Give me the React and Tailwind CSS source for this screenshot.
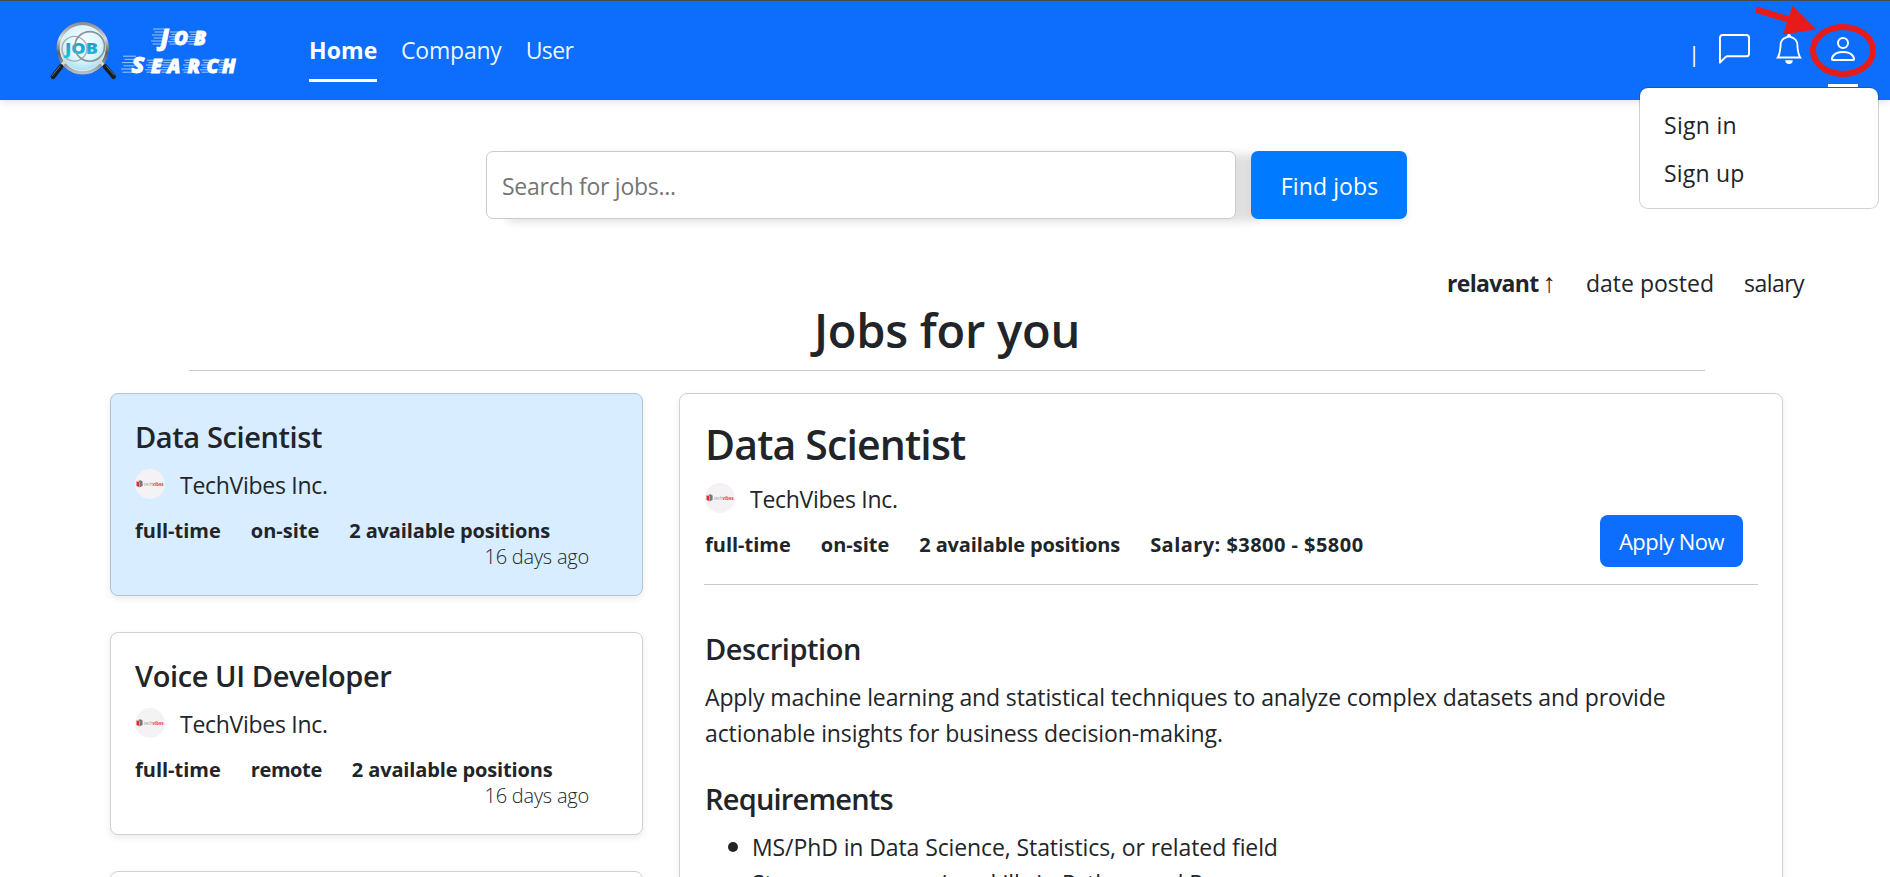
import React from 'react';
import { BsBell, BsChatLeft, BsPerson } from 'react-icons/bs';

function Streaks({ x, y, h, w = 7 }) {
  const n = 6;
  return (
    <g stroke="#fff" strokeWidth="0.8" opacity="0.75">
      {Array.from({ length: n }, (_, i) => {
        const ly = y - h + 0.5 + (i * (h - 1)) / (n - 1);
        const shift = (n - i) * 0.5 - 1;
        return <line key={i} x1={x - w + shift + (i % 2) * 2} x2={x + 3 + shift} y1={ly} y2={ly} />;
      })}
    </g>
  );
}

function Logo() {
  return (
    <svg className="block shrink-0" width="192" height="66" viewBox="48 18 192 66">
      <defs>
        <radialGradient id="glass" cx="0.5" cy="0.4" r="0.6">
          <stop offset="0" stopColor="#ffffff" />
          <stop offset="0.6" stopColor="#d9f6fd" />
          <stop offset="1" stopColor="#9fdcf2" />
        </radialGradient>
        <linearGradient id="rim" x1="0" y1="0" x2="0" y2="1">
          <stop offset="0" stopColor="#8f9295" />
          <stop offset="0.3" stopColor="#d6d9db" />
          <stop offset="0.6" stopColor="#5c6064" />
          <stop offset="1" stopColor="#b9bdc0" />
        </linearGradient>
        <linearGradient id="cyan" x1="0" y1="0" x2="0" y2="1">
          <stop offset="0" stopColor="#1f8fc0" />
          <stop offset="1" stopColor="#18c4e6" />
        </linearGradient>
      </defs>
      <circle cx="82.7" cy="48.2" r="24.4" fill="url(#glass)" stroke="url(#rim)" strokeWidth="3.6" />
      <circle cx="82.7" cy="48.2" r="22.6" fill="none" stroke="#eef4f6" strokeWidth="0.8" />
      <g strokeLinecap="round">
        <line x1="66" y1="60" x2="62" y2="65" stroke="#d5d8da" strokeWidth="3" />
        <line x1="61" y1="66.5" x2="53" y2="76.8" stroke="#1a1f24" strokeWidth="4.8" />
        <line x1="60" y1="66" x2="52.2" y2="75.8" stroke="#6a7076" strokeWidth="1" />
        <line x1="98.5" y1="60" x2="103.5" y2="65" stroke="#d5d8da" strokeWidth="3" />
        <line x1="105" y1="66.5" x2="113.6" y2="76.6" stroke="#1a1f24" strokeWidth="4.8" />
        <line x1="106.3" y1="66" x2="114.2" y2="75" stroke="#6a7076" strokeWidth="1" />
      </g>
      <circle cx="74.4" cy="48.8" r="12.4" fill="none" stroke="#a4aeb3" strokeWidth="1.3" />
      <text x="65" y="54.2" textLength="33" lengthAdjust="spacingAndGlyphs" fill="url(#cyan)" className="font-['Open_Sans',sans-serif] text-[16.5px] font-extrabold">JOB</text>
      <circle cx="89.7" cy="46.4" r="14.8" fill="none" stroke="#8a9498" strokeWidth="1.6" />
      <Streaks x={159} y={44.5} h={16} w={8} />
      <Streaks x={174} y={44.5} h={13} w={6} />
      <Streaks x={194} y={44.5} h={13} w={7} />
      <Streaks x={131} y={72.7} h={17} w={10} />
      <Streaks x={151} y={72.7} h={13} w={6} />
      <Streaks x={168} y={72.7} h={13} w={8} />
      <Streaks x={188} y={72.7} h={13} w={6} />
      <Streaks x={206} y={72.7} h={13} w={6} />
      <Streaks x={223} y={72.7} h={13} w={6} />
      <g fill="#fff" stroke="#fff" strokeWidth="0.8" className="font-['Open_Sans',sans-serif] font-extrabold italic">
        <text y="44.5"><tspan x="160.5" className="text-[22.5px]">J</tspan><tspan className="text-[19px]" x="174 194">OB</tspan></text>
        <text y="72.7"><tspan x="131.5" className="text-[23.5px]">S</tspan><tspan className="text-[19px]" x="151 167.5 187.5 206.5 222">EARCH</tspan></text>
      </g>
    </svg>
  );
}

function Header() {
  return (
    <header className="relative z-10 flex h-[100px] items-start border-t border-[#45484c] bg-[#0d6efd] pl-12 text-white shadow-[0_2px_8px_rgba(0,0,0,0.12)]">
      <div className="mt-[17px]"><Logo /></div>
      <nav className="mt-[31px] ml-[69px] flex gap-6 text-[23px] leading-9">
        <a className="w-[68px] border-b-3 border-white pb-[11px] font-bold tracking-[0.1px]">Home</a>
        <a className="text-white/95 tracking-[-0.2px]">Company</a>
        <a className="text-white/95 tracking-[-0.6px]">User</a>
      </nav>
      <div className="mr-8 ml-auto flex items-start">
        <span className="mt-[34px] mr-[19px] text-[22px] leading-9">|</span>
        <BsChatLeft className="mt-[33px] mr-6 size-[31px]" />
        <BsBell className="mt-[33px] mr-6 size-[30px]" />
        <span className="flex h-[86px] w-[30px] justify-center border-b-3 border-white">
          <BsPerson className="mt-[32px] size-8 shrink-0" />
        </span>
      </div>
      <div className="absolute top-[86px] left-[1639px] h-[122px] w-[240px] rounded-[9px] border border-black/18 bg-white bg-clip-padding pt-[13px] pl-6 text-[23px] leading-[48px] text-[#212529]">
        <div className="tracking-[0.3px]">Sign in</div>
        <div className="tracking-[0.2px]">Sign up</div>
      </div>
      <svg className="absolute top-[-1px] left-[1750px]" width="130" height="84" viewBox="1750 0 130 84">
        <ellipse cx="1843" cy="50.5" rx="30" ry="23.5" fill="none" stroke="#e81b1b" strokeWidth="6" />
        <path d="M1756 9.5 1792 20.5" stroke="#e81b1b" strokeWidth="6.4" />
        <path d="M1792.5 5.5 1816.5 29.5 1783 34.5Z" fill="#e81b1b" />
      </svg>
    </header>
  );
}

function Avatar() {
  return (
    <svg className="size-[30px] shrink-0" viewBox="0 0 30 30">
      <circle cx="15" cy="15" r="15" fill="#f4f2f5" />
      <path d="M1.5 12.3 4 13.2V18L1.5 17Z" fill="#e02b2b" />
      <path d="M3 12 5.5 11.2 7.6 12.4V17L4.4 18.6V13.3Z" fill="#77787c" />
      <text x="9" y="16.8" textLength="8.5" lengthAdjust="spacingAndGlyphs" fill="#9a9a9e" className="font-['Open_Sans',sans-serif] text-[4.6px]">tech</text>
      <text x="17.6" y="16.8" textLength="11" lengthAdjust="spacingAndGlyphs" fill="#e63b3b" className="font-['Open_Sans',sans-serif] text-[4.6px] font-bold">vibes</text>
    </svg>
  );
}

function Company() {
  return (
    <div className="mt-3 flex h-9 items-center">
      <span className="-mt-0.5"><Avatar /></span>
      <span className="ml-[15px] tracking-[-0.28px]">TechVibes Inc.</span>
    </div>
  );
}

function Tags({ place, salary }) {
  return (
    <div className="mt-[13px] flex h-[29px] gap-[30px] text-[20px] leading-[29px] font-bold whitespace-nowrap">
      <span>full-time</span>
      <span className={place === 'remote' ? 'tracking-[-0.4px]' : ''}>{place}</span>
      <span className="tracking-[-0.13px]">2 available positions</span>
      {salary && <span className="tracking-[0.456px]">{salary}</span>}
    </div>
  );
}

function Card({ active, children }) {
  return (
    <div className={`h-[203px] w-[533px] shrink-0 rounded-lg border pt-[25px] pl-6 shadow-[0_3px_7px_rgba(0,0,0,0.08)] ${active ? 'border-[#b0c5d7] bg-[#d8edff]' : 'border-[#d0d1d2] bg-white'}`}>
      {children}
    </div>
  );
}

function JobCard({ title, place, active }) {
  return (
    <Card active={active}>
      <h5 className="text-[29px] leading-9 font-semibold tracking-[-0.4px]">{title}</h5>
      <Company />
      <Tags place={place} />
      <div className="pr-[53px] text-right text-[20px] leading-[23px] font-light tracking-[-0.22px]">16 days ago</div>
    </Card>
  );
}

function Detail() {
  return (
    <div className="h-[600px] w-[1104px] rounded-lg border border-[#d0d1d2] px-6 pt-[25px] shadow-[0_3px_7px_rgba(0,0,0,0.08)]">
      <div className="flex h-[148px] items-end justify-between">
        <div className="pb-2 pl-px">
          <h3 className="text-[41px] leading-[50px] font-semibold tracking-[-0.85px]">Data Scientist</h3>
          <Company />
          <Tags place="on-site" salary="Salary: $3800 - $5800" />
        </div>
        <button className="mr-[15px] h-[52px] w-[143px] rounded-lg bg-[#0d6efd] pt-px text-[22px] tracking-[-0.55px] text-white">Apply Now</button>
      </div>
      <hr className="mt-[17px] border-[#c8c9ca]" />
      <div className="pl-px">
        <h5 className="mt-[46px] text-[29px] leading-9 font-semibold tracking-[-0.44px]">Description</h5>
        <p className="mt-3 leading-9">
          <span className="tracking-[-0.129px] whitespace-nowrap">Apply machine learning and statistical techniques to analyze complex datasets and provide</span>
          <br />
          <span className="tracking-[-0.104px]">actionable insights for business decision-making.</span>
        </p>
        <h5 className="mt-[30px] text-[29px] leading-9 font-semibold tracking-[-0.8px]">Requirements</h5>
        <ul className="mt-3 leading-9">
          {['MS/PhD in Data Science, Statistics, or related field', 'Strong programming skills in Python and R'].map((t) => (
            <li key={t} className="flex items-center tracking-[-0.1px]">
              <i className="mr-[14px] ml-[23px] size-[10px] rounded-full bg-[#212529]" />
              {t}
            </li>
          ))}
        </ul>
      </div>
    </div>
  );
}

export default function App() {
  return (
    <div className="h-[877px] w-[1890px] overflow-hidden bg-white font-['Open_Sans',sans-serif] text-[23px] text-[#212529]">
      <Header />
      <div className="mt-[51px] flex h-[68px] gap-[15px] pl-[486px]">
        <div className="flex w-[750px] items-center rounded-[7px] border border-[#c9cacb] bg-white pt-[3px] pl-[15px] tracking-[-0.265px] text-[#757575] shadow-[20px_3px_8px_rgba(0,0,0,0.12)]">Search for jobs...</div>
        <button className="relative w-[156px] rounded-[7px] bg-[#007bff] pt-[3px] pl-px tracking-[0.1px] text-white shadow-[0_3px_7px_rgba(0,0,0,0.08)]">Find jobs</button>
      </div>
      <div className="mt-[47px] flex h-[34px] justify-end gap-[30px] pr-[86px] leading-[34px]">
        <span className="flex gap-1"><b className="tracking-[-0.7px]">relavant</b><span className="font-['Liberation_Sans',sans-serif] text-[27px]">↑</span></span>
        <span>date posted</span>
        <span className="tracking-[-0.54px]">salary</span>
      </div>
      <h1 className="pt-px pl-1 text-center text-[47px] leading-[58px] font-semibold tracking-[-0.25px]">Jobs for you</h1>
      <hr className="mt-[11px] ml-[189px] w-[1516px] border-[#c8c9ca]" />
      <div className="mt-[22px] flex gap-9 pl-[110px]">
        <div className="flex w-[533px] flex-col gap-9">
          <JobCard title="Data Scientist" place="on-site" active />
          <JobCard title="Voice UI Developer" place="remote" />
          <Card />
        </div>
        <Detail />
      </div>
    </div>
  );
}
